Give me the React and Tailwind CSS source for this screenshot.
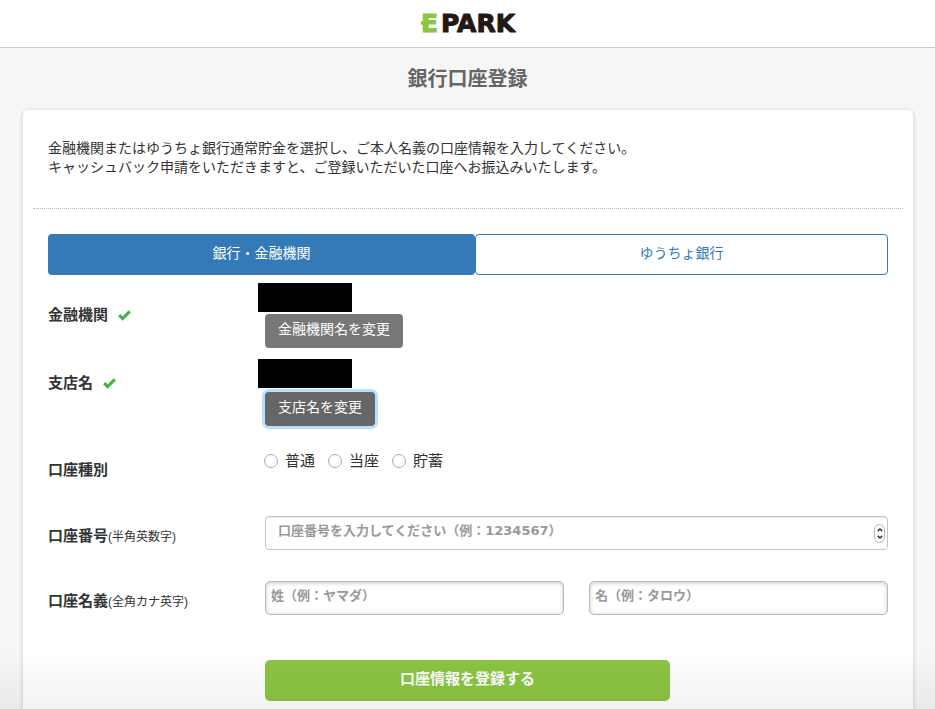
import React from "react";

function Logo() {
  return (
    <svg
      role="img"
      aria-label="EPARK"
      className="h-[36px] w-[100px]"
      viewBox="0 0 100 36"
      fontFamily="'DejaVu Sans', sans-serif"
      fontSize="25"
      fontWeight="700"
      strokeLinejoin="round"
      strokeLinecap="round"
      overflow="visible"
    >
      <g fill="#8cc63f" stroke="#8cc63f" strokeWidth="1">
        <text x="3" y="28">E</text>
        <path d="M4.5 19h5" strokeWidth="3.8" />
      </g>
      <text x="23" y="28" fill="#231815" stroke="#231815" strokeWidth="1">
        PARK
      </text>
    </svg>
  );
}

function Check() {
  return (
    <svg className="ml-[10px] h-[12px] w-[13px]" viewBox="0 0 13 12" aria-hidden="true">
      <path d="M1.2 6.2l3.4 3.4L11.8 2.4" fill="none" stroke="#43b649" strokeWidth="3.2" />
    </svg>
  );
}

function Row({ className, label, labelClass, children }) {
  return (
    <div className={`flex ${className}`}>
      <div className={`flex w-[217px] shrink-0 items-center self-start pl-[15px] text-[15px] leading-5 font-bold ${labelClass}`}>
        {label}
      </div>
      <div className="min-w-0 flex-1 px-[15px]">{children}</div>
    </div>
  );
}

function Note({ children }) {
  return <span className="text-[12px] font-normal">{children}</span>;
}

const nameInput =
  "h-[34px] min-w-0 flex-1 rounded-[5px] border border-[#bababa] bg-white px-[5px] pb-[6px] text-[13px] font-bold shadow-[inset_0_1px_4px_rgba(0,0,0,0.22)] placeholder:text-[#999]";

export default function App() {
  return (
    <div className="flex min-h-screen flex-col bg-[#f6f6f6] font-['Liberation_Sans','Noto_Sans_CJK_JP',sans-serif] text-[#333]">
      <header className="flex h-12 items-center justify-center border-b border-[#ccc] bg-white pb-[3px]">
        <Logo />
      </header>
      <h1 className="pt-4 pb-4 text-center text-[20px] leading-[30px] font-bold text-[#666]">
        銀行口座登録
      </h1>

      <main className="mr-[22px] ml-[23px] flex-1 rounded-t-[5px] bg-white px-[10px] pb-2 shadow-[0_1px_4px_rgba(0,0,0,0.2)]">
        <p className="px-[15px] pt-[29px] pb-[31px] text-[14px] leading-[19px]">
          金融機関またはゆうちょ銀行通常貯金を選択し、ご本人名義の口座情報を入力してください。
          <br />
          キャッシュバック申請をいただきますと、ご登録いただいた口座へお振込みいたします。
        </p>
        <hr className="border-t border-dotted border-[#bbb]" />

        <form onSubmit={(e) => e.preventDefault()}>
          <div className="mt-[25px] flex px-[15px] text-[14px] leading-5">
            <button
              type="button"
              className="h-[41px] w-[427px] shrink rounded-[4px] bg-[#337ab7] pb-1 text-white"
            >
              銀行・金融機関
            </button>
            <button
              type="button"
              className="h-[41px] flex-1 rounded-[4px] border border-[#337ab7] bg-white pb-1 text-[#337ab7]"
            >
              ゆうちょ銀行
            </button>
          </div>

          <Row className="mt-2" labelClass="pt-[22px]" label={<>金融機関<Check /></>}>
            <div className="-ml-[7px] h-[29px] w-[94px] bg-black" />
            <button
              type="button"
              className="mt-[2px] block h-[34px] rounded-[4px] bg-[#777] px-[13px] pb-1 text-[14px] leading-5 text-white"
            >
              金融機関名を変更
            </button>
          </Row>

          <Row className="mt-[11px]" labelClass="pt-[14px]" label={<>支店名<Check /></>}>
            <div className="-ml-[7px] h-[29px] w-[94px] bg-black" />
            <button
              type="button"
              className="mt-1 block h-[34px] rounded-[4px] bg-[#666] px-[13px] pb-1 text-[14px] leading-5 text-white ring-3 ring-[#bbdefb]"
            >
              支店名を変更
            </button>
          </Row>

          <Row className="mt-6" labelClass="pt-[10px]" label="口座種別">
            <div role="radiogroup" aria-label="口座種別" className="-ml-px flex h-[22px] items-center gap-[13px] text-[15px] leading-[22px]">
              {["普通", "当座", "貯蓄"].map((t) => (
                <label key={t} className="flex items-center gap-[7px]">
                  <input
                    type="radio"
                    name="type"
                    className="h-[14px] w-[14px] appearance-none rounded-full border border-[#aaa] bg-white checked:border-4"
                  />
                  {t}
                </label>
              ))}
            </div>
          </Row>

          <Row
            className="mt-9"
            labelClass="pt-[10px]"
            label={<label htmlFor="number">口座番号<Note>(半角英数字)</Note></label>}
          >
            <div className="relative">
              <input
                id="number"
                type="number"
                placeholder="口座番号を入力してください（例：1234567）"
                className="block h-[34px] w-full appearance-none rounded-[4px] border border-[#c4c4c4] bg-white px-3 pb-[6px] font-['DejaVu_Sans','Noto_Sans_CJK_JP',sans-serif] text-[13px] font-bold shadow-[inset_0_1px_1px_rgba(0,0,0,0.08)] [appearance:textfield] placeholder:text-[#999]"
              />
              <div className="absolute top-2 right-[3px] flex h-[19px] w-[11px] flex-col items-center justify-between rounded-full border border-[#b5b5b5] bg-white py-[3px]">
                <button type="button" aria-label="増やす">
                  <svg className="block h-[4px] w-[6px]" viewBox="0 0 6 4">
                    <path d="M.7 3.3L3 1l2.3 2.3" fill="none" stroke="#222" strokeWidth="1.3" />
                  </svg>
                </button>
                <button type="button" aria-label="減らす">
                  <svg className="block h-[4px] w-[6px]" viewBox="0 0 6 4">
                    <path d="M.7 .7L3 3 5.3 .7" fill="none" stroke="#222" strokeWidth="1.3" />
                  </svg>
                </button>
              </div>
            </div>
          </Row>

          <Row
            className="mt-[31px]"
            labelClass="pt-[10px]"
            label={<label htmlFor="sei">口座名義<Note>(全角カナ英字)</Note></label>}
          >
            <div className="flex gap-[25px]">
              <input id="sei" type="text" placeholder="姓（例：ヤマダ）" className={nameInput} />
              <input aria-label="名" type="text" placeholder="名（例：タロウ）" className={nameInput} />
            </div>
          </Row>

          <Row className="mt-[45px]" labelClass="" label={null}>
            <button
              type="submit"
              className="block h-[41px] w-[65%] rounded-[5px] bg-[#8bc543] pb-1 text-[15px] leading-5 font-bold text-white"
            >
              口座情報を登録する
            </button>
          </Row>
        </form>
      </main>

      <div className="pointer-events-none fixed inset-x-0 bottom-0 h-14 bg-linear-to-b from-black/0 to-black/5" />
    </div>
  );
}
